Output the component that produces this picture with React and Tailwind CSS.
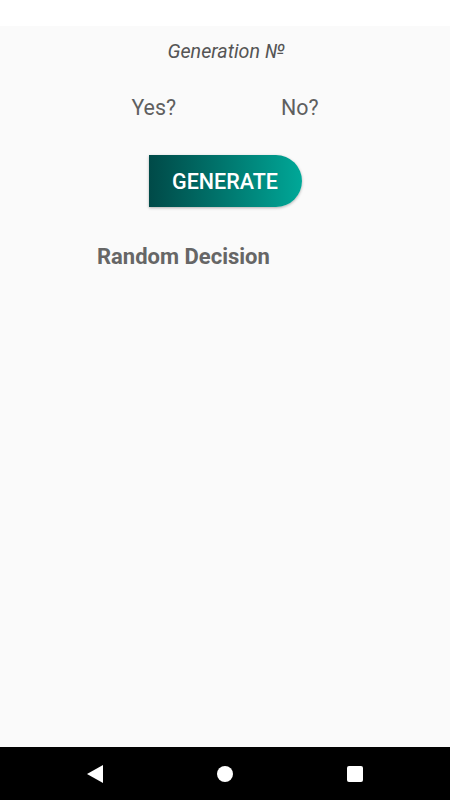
export default function App() {
  return (
    <div className="flex flex-col w-[450px] h-[800px] font-['Roboto',sans-serif]">
      {/* status bar */}
      <div className="bg-white h-[26px] shrink-0" />

      <div className="flex flex-col flex-1 bg-[#fafafa]">
        <p className="mt-[14px] ml-[2px] text-[#555] text-[19.7px] text-center italic leading-[24px]">
          Generation №
        </p>

        <div className="flex justify-center gap-[105px] mt-[31px] text-[#5f5f5f] text-[21.4px] leading-[26px]">
          <span>Yes?</span>
          <span>No?</span>
        </div>

        <button className="flex justify-center items-center bg-gradient-to-r from-[#004a48] to-[#00a898] shadow-[0_1px_3px_rgba(0,0,0,0.3)] mx-auto mt-[34px] pt-[2px] rounded-r-[26px] w-[153px] h-[52px] font-medium text-[21.5px] text-white">
          GENERATE
        </button>

        <p className="mt-[37px] ml-[97px] font-bold text-[#666] text-[22px] leading-[26px]">
          Random Decision
        </p>
      </div>

      {/* nav bar */}
      <div className="flex justify-between items-center bg-black px-[87px] h-[53px] shrink-0">
        <svg width="16" height="18" viewBox="0 0 16 18">
          <path d="M16 0 L16 18 L0 9 Z" fill="#fff" />
        </svg>
        <div className="bg-white rounded-full w-[16px] h-[16px]" />
        <div className="bg-white rounded-[2px] w-[16px] h-[16px]" />
      </div>
    </div>
  );
}
